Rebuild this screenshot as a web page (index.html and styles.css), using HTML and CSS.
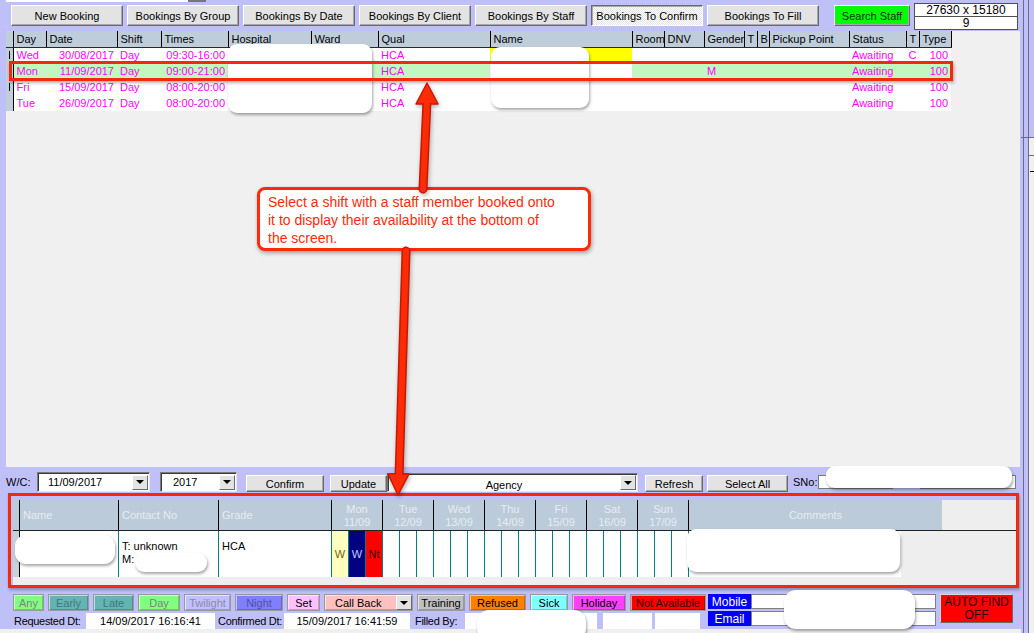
FILE: index.html
```html
<!DOCTYPE html>
<html lang="en">
<head>
    <meta charset="UTF-8">
    <title>Bookings To Confirm</title>
    <link rel="stylesheet" href="styles.css">
</head>
<body>
<div class="screen">
    <div class="main">
        <div class="topbar"><div class="topbox"></div></div>

        <div class="toolbar">
            <button class="btn tb">New Booking</button>
            <button class="btn tb">Bookings By Group</button>
            <button class="btn tb">Bookings By Date</button>
            <button class="btn tb">Bookings By Client</button>
            <button class="btn tb">Bookings By Staff</button>
            <button class="btn tb pressed">Bookings To Confirm</button>
            <button class="btn tb">Bookings To Fill</button>
            <button class="btn search">Search Staff</button>
            <div class="counter">
                <div>27630 x 15180</div>
                <div>9</div>
            </div>
        </div>

        <div class="panel-top">
            <table class="bookings">
                <colgroup>
                    <col class="w-ind"><col class="w-day"><col class="w-date"><col class="w-shift">
                    <col class="w-times"><col class="w-hosp"><col class="w-ward"><col class="w-qual">
                    <col class="w-name"><col class="w-room"><col class="w-dnv"><col class="w-gender">
                    <col class="w-t"><col class="w-b"><col class="w-pickup"><col class="w-status">
                    <col class="w-t"><col class="w-type">
                </colgroup>
                <thead>
                    <tr>
                        <th class="ind"></th><th>Day</th><th>Date</th><th>Shift</th><th>Times</th>
                        <th>Hospital</th><th>Ward</th><th>Qual</th><th>Name</th><th>Room</th>
                        <th>DNV</th><th>Gender</th><th>T</th><th>B</th><th>Pickup Point</th>
                        <th>Status</th><th>T</th><th>Type</th>
                    </tr>
                </thead>
                <tbody>
                    <tr>
                        <td class="ind"><span class="caret"></span></td><td>Wed</td><td class="r">30/08/2017</td><td>Day</td><td class="r">09:30-16:00</td>
                        <td></td><td></td><td>HCA</td><td class="yellow"></td><td></td>
                        <td></td><td></td><td></td><td></td><td></td>
                        <td>Awaiting</td><td class="c">C</td><td class="r">100</td>
                    </tr>
                    <tr class="sel">
                        <td class="ind"><span class="caret"></span></td><td>Mon</td><td class="r">11/09/2017</td><td>Day</td><td class="r">09:00-21:00</td>
                        <td></td><td></td><td>HCA</td><td class="blank"></td><td></td>
                        <td></td><td>M</td><td></td><td></td><td></td>
                        <td>Awaiting</td><td class="c"></td><td class="r">100</td>
                    </tr>
                    <tr>
                        <td class="ind"><span class="caret"></span></td><td>Fri</td><td class="r">15/09/2017</td><td>Day</td><td class="r">08:00-20:00</td>
                        <td></td><td></td><td>HCA</td><td></td><td></td>
                        <td></td><td></td><td></td><td></td><td></td>
                        <td>Awaiting</td><td class="c"></td><td class="r">100</td>
                    </tr>
                    <tr>
                        <td class="ind"></td><td>Tue</td><td class="r">26/09/2017</td><td>Day</td><td class="r">08:00-20:00</td>
                        <td></td><td></td><td>HCA</td><td></td><td></td>
                        <td></td><td></td><td></td><td></td><td></td>
                        <td>Awaiting</td><td class="c"></td><td class="r">100</td>
                    </tr>
                </tbody>
            </table>
        </div>

        <div class="filterbar">
            <span class="lbl wc-lbl">W/C:</span>
            <div class="combo wc"><span class="combo-text">11/09/2017</span><span class="dd"></span></div>
            <div class="combo year"><span class="combo-text">2017</span><span class="dd"></span></div>
            <button class="btn fb confirm">Confirm</button>
            <button class="btn fb update">Update</button>
            <div class="combo agency"><span class="combo-text">Agency</span><span class="dd"></span></div>
            <button class="btn fb refresh">Refresh</button>
            <button class="btn fb selectall">Select All</button>
            <span class="lbl sno-lbl">SNo:</span>
            <div class="field sno"></div>
            <div class="field sno2"></div>
        </div>

        <div class="avail-box">
            <div class="avail-panel">
                <div class="avail-head">
                    <div class="ah a-ind"></div>
                    <div class="ah c-name">Name</div>
                    <div class="ah c-contact">Contact No</div>
                    <div class="ah c-grade">Grade</div>
                    <div class="ah dayh">Mon<br>11/09</div>
                    <div class="ah dayh">Tue<br>12/09</div>
                    <div class="ah dayh">Wed<br>13/09</div>
                    <div class="ah dayh">Thu<br>14/09</div>
                    <div class="ah dayh">Fri<br>15/09</div>
                    <div class="ah dayh">Sat<br>16/09</div>
                    <div class="ah dayh">Sun<br>17/09</div>
                    <div class="ah c-comments">Comments</div>
                </div>
                <div class="avail-row">
                    <div class="ad a-ind"></div>
                    <div class="ad c-name"></div>
                    <div class="ad c-contact">T: unknown<br>M:</div>
                    <div class="ad c-grade">HCA</div>
                    <div class="ad a-day">
                        <span class="slot s-early">W</span><span class="slot s-navy">W</span><span class="slot s-night">Nt</span>
                    </div>
                    <div class="ad a-day"><span class="slot"></span><span class="slot"></span><span class="slot"></span></div>
                    <div class="ad a-day"><span class="slot"></span><span class="slot"></span><span class="slot"></span></div>
                    <div class="ad a-day"><span class="slot"></span><span class="slot"></span><span class="slot"></span></div>
                    <div class="ad a-day"><span class="slot"></span><span class="slot"></span><span class="slot"></span></div>
                    <div class="ad a-day"><span class="slot"></span><span class="slot"></span><span class="slot"></span></div>
                    <div class="ad a-day"><span class="slot"></span><span class="slot"></span><span class="slot"></span></div>
                    <div class="ad c-comments"></div>
                </div>
            </div>
        </div>

        <div class="bottom">
            <div class="bottom-left">
                <div class="legend">
                    <div class="lg lg-any">Any</div>
                    <div class="lg lg-early">Early</div>
                    <div class="lg lg-late">Late</div>
                    <div class="lg lg-day">Day</div>
                    <div class="lg lg-twilight">Twilight</div>
                    <div class="lg lg-night">Night</div>
                    <div class="lg lg-set">Set</div>
                    <div class="lg lg-callback"><span class="cb-text">Call Back</span><span class="dd"></span></div>
                    <div class="lg lg-training">Training</div>
                    <div class="lg lg-refused">Refused</div>
                    <div class="lg lg-sick">Sick</div>
                    <div class="lg lg-holiday">Holiday</div>
                    <div class="lg lg-notavail">Not Available</div>
                </div>
                <div class="status">
                    <span class="st-label req">Requested Dt:</span>
                    <span class="st-field f-req">14/09/2017 16:16:41</span>
                    <span class="st-label conf">Confirmed Dt:</span>
                    <span class="st-field f-conf">15/09/2017 16:41:59</span>
                    <span class="st-label filled">Filled By:</span>
                    <span class="st-field filledby"></span>
                    <span class="st-field small1"></span>
                    <span class="st-field small2"></span>
                </div>
            </div>
            <div class="contacts">
                <div class="contact-row"><span class="c-label">Mobile</span><span class="c-input"></span></div>
                <div class="contact-row"><span class="c-label">Email</span><span class="c-input"></span></div>
            </div>
            <button class="autofind">AUTO FIND<br>OFF</button>
        </div>
        <div class="footer"></div>
    </div>

    <div class="side">
        <div class="side-top"></div>
        <div class="side-bottom"><span class="side-dash"></span></div>
    </div>

    <!-- redaction blobs -->
    <div class="blob b-hosp"></div>
    <div class="blob b-name"></div>
    <div class="blob b-sno"></div>
    <div class="blob b-staff"></div>
    <div class="blob b-phone"></div>
    <div class="blob b-comment"></div>
    <div class="blob b-mobile"></div>
    <div class="blob b-filled"></div>

    <!-- annotation -->
    <div class="row-mark"></div>
    <div class="callout">Select a shift with a staff member booked onto<br>it to display their availability at the bottom of<br>the screen.</div>
    <svg class="arrows" width="1034" height="633" viewBox="0 0 1034 633">
        <g stroke="#c41a00" stroke-linecap="round" stroke-linejoin="round">
            <line x1="423" y1="189" x2="427" y2="100" stroke-width="9"/>
            <polygon points="427,83 438,104 416,104" fill="#ff2a06" stroke-width="1.5"/>
            <line x1="406" y1="251" x2="399" y2="478" stroke-width="9"/>
            <polygon points="398,495 388,474 409,474" fill="#ff2a06" stroke-width="1.5"/>
        </g>
        <g stroke="#ff2a06" stroke-linecap="round">
            <line x1="423" y1="189" x2="427" y2="101" stroke-width="6"/>
            <line x1="406" y1="251" x2="399" y2="477" stroke-width="6"/>
        </g>
    </svg>
</div>
</body>
</html>
```

FILE: styles.css
```css
* {
    margin: 0;
    padding: 0;
    box-sizing: border-box;
}

body {
    background: #c0c0f8;
    font-family: "Liberation Sans", Arial, sans-serif;
    font-size: 11px;
    color: #000;
}

button {
    font-family: inherit;
    font-size: 11px;
    color: #000;
}

.screen {
    position: relative;
    width: 1034px;
    height: 633px;
    display: flex;
    overflow: hidden;
}

.main {
    width: 1021px;
    display: flex;
    flex-direction: column;
}

/* top strip */
.topbar {
    height: 3px;
    padding-left: 6px;
}

.topbox {
    width: 200px;
    height: 2px;
    background: linear-gradient(to right, #fff 182px, #777 182px);
}

/* main toolbar */
.toolbar {
    display: flex;
    align-items: flex-start;
    height: 28px;
    padding-left: 11px;
}

.btn {
    height: 21px;
    background: #e3e3e3;
    border: 1px solid;
    border-color: #fff #6a6a6a #6a6a6a #fff;
    box-shadow: inset -1px -1px #a8a8a8;
    display: flex;
    align-items: center;
    justify-content: center;
    white-space: nowrap;
    flex-shrink: 0;
}

.tb {
    width: 112px;
    margin-top: 2px;
    margin-right: 4px;
}

.tb.pressed {
    border-color: #6a6a6a #fff #fff #6a6a6a;
    box-shadow: inset 1px 1px #a8a8a8;
    background: repeating-conic-gradient(#fff 0 25%, #e4e4e4 0 50%) 0 0 / 2px 2px;
}

.search {
    width: 76px;
    margin-top: 2px;
    margin-left: 11px;
    background: #00ff00;
    color: #0c2a0c;
}

.counter {
    width: 104px;
    height: 27px;
    margin-left: 4px;
    background: #fff;
    border: 1px solid #505050;
    font-size: 12px;
}

.counter div {
    height: 13px;
    line-height: 13px;
    text-align: center;
}

.counter div:first-child {
    border-bottom: 1px solid #505050;
}

/* bookings grid */
.panel-top {
    margin-left: 6px;
    width: 1014px;
    height: 436px;
    background: #f0f0f0;
}

.bookings {
    border-collapse: collapse;
    table-layout: fixed;
    width: 945px;
}

.w-ind { width: 7px; }
.w-day { width: 33px; }
.w-date { width: 71px; }
.w-shift { width: 44px; }
.w-times { width: 67px; }
.w-hosp { width: 83px; }
.w-ward { width: 67px; }
.w-qual { width: 112px; }
.w-name { width: 142px; }
.w-room { width: 32px; }
.w-dnv { width: 40px; }
.w-gender { width: 40px; }
.w-t { width: 13px; }
.w-b { width: 12px; }
.w-pickup { width: 80px; }
.w-status { width: 57px; }
.w-type { width: 32px; }

.bookings th {
    height: 16px;
    background: #bfcddb;
    border-right: 1px solid #000;
    border-bottom: 1px solid #2a2a2a;
    font-weight: normal;
    text-align: left;
    padding: 0 3px;
    white-space: nowrap;
    overflow: hidden;
}

.bookings td {
    height: 16px;
    padding: 0 3px;
    background: #fff;
    color: #ff00ff;
    white-space: nowrap;
    overflow: hidden;
}

.bookings .ind {
    background: #c0cedb;
    border-right: 1px solid #000;
    padding: 0 0 0 3px;
}

.caret {
    display: block;
    width: 1px;
    height: 8px;
    background: #000;
}

.bookings td.r {
    text-align: right;
}

.bookings td.c {
    text-align: center;
    padding: 0;
}

.bookings td.yellow {
    background: #ffff00;
}

.bookings tr.sel td {
    background: #c0f8c0;
}

.bookings tr.sel td.blank {
    background: #fff;
}

.bookings tr.sel td.ind {
    background: #c0cedb;
}

/* filter bar */
.filterbar {
    display: flex;
    align-items: flex-start;
    margin-top: 5px;
    height: 20px;
}

.lbl {
    height: 20px;
    display: flex;
    align-items: center;
    flex-shrink: 0;
}

.wc-lbl {
    width: 37px;
    padding-left: 6px;
}

.combo {
    display: flex;
    align-items: center;
    justify-content: space-between;
    background: #fff;
    border: 1px solid;
    border-color: #7a7a7a #e8e8e8 #e8e8e8 #7a7a7a;
    box-shadow: inset 1px 1px #3a3a3a;
    padding: 0 1px 0 0;
    flex-shrink: 0;
}

.combo.wc {
    width: 113px;
    height: 20px;
}

.combo.year {
    width: 77px;
    height: 20px;
    margin-left: 10px;
}

.combo.agency {
    width: 251px;
    height: 19px;
    margin-top: 1px;
}

.combo-text {
    padding-left: 10px;
}

.combo.year .combo-text {
    padding-left: 12px;
}

.combo.agency .combo-text {
    flex: 1;
    text-align: center;
    padding: 4px 0 0 0;
}

.dd {
    width: 16px;
    height: 15px;
    background: #e3e3e3;
    border: 1px solid;
    border-color: #fff #6a6a6a #6a6a6a #fff;
    display: flex;
    align-items: center;
    justify-content: center;
    flex-shrink: 0;
}

.dd::after {
    content: "";
    border-left: 4px solid transparent;
    border-right: 4px solid transparent;
    border-top: 4px solid #000;
}

.fb {
    height: 17px;
    margin-top: 3px;
}

.confirm { width: 78px; margin-left: 9px; }
.update { width: 57px; margin-left: 6px; }
.refresh { width: 58px; margin-left: 7px; }
.selectall { width: 81px; margin-left: 4px; }

.sno-lbl {
    margin-left: 5px;
    width: 25px;
}

.field {
    height: 14px;
    margin-top: 3px;
    background: #fff;
    border: 1px solid #7a7a7a;
}

.sno { width: 75px; }
.sno2 { width: 96px; margin-left: 27px; }

/* availability grid */
.avail-box {
    margin-top: 1px;
    margin-left: 8px;
    width: 1011px;
    height: 95px;
    border: 3px solid #f5280a;
    box-shadow: 1px 2px 3px rgba(0, 0, 0, 0.3);
}

.avail-panel {
    margin-top: 4px;
    margin-left: 2px;
    width: 1003px;
    height: 85px;
    background: #eeeeee;
}

.avail-head,
.avail-row {
    display: flex;
}

.avail-head {
    height: 31px;
    border-bottom: 1px solid #222;
}

.ah {
    background: #bccbd9;
    color: #e8ecf1;
    border-right: 1px solid #000;
    display: flex;
    align-items: center;
    padding-left: 3px;
    line-height: 13px;
}

.a-ind { width: 7px; }
.c-name { width: 99px; }
.c-contact { width: 100px; }
.c-grade { width: 113px; }
.dayh { width: 51px; }
.c-comments { width: 253px; }

.ah.a-ind {
    padding: 0;
}

.ah.dayh {
    justify-content: center;
    text-align: center;
    padding: 2px 0 0 0;
}

.ah.c-comments {
    justify-content: center;
    border-right: none;
    padding: 0;
}

.avail-row {
    height: 46px;
}

.ad {
    background: #fff;
    border-right: 1px solid #008080;
    padding: 9px 0 0 3px;
    line-height: 13px;
}

.ad.a-ind {
    background: #c8d0d8;
    border-right-color: #000;
    padding: 0;
}

.ad.a-day {
    display: flex;
    width: 51px;
    padding: 0;
    border-right: none;
}

.slot {
    width: 17px;
    border-right: 1px solid #008080;
    display: flex;
    align-items: center;
    justify-content: center;
}

.s-early {
    background: #ffffc0;
    color: #806000;
}

.s-navy {
    background: #000080;
    color: #c8c8ff;
}

.s-night {
    background: #ff0000;
    color: #400000;
}

.ad.c-comments {
    background: linear-gradient(to right, #fff 212px, transparent 212px);
    border-right: none;
}

/* legend and status rows */
.bottom {
    display: flex;
    margin-top: 6px;
    height: 35px;
}

.bottom-left {
    width: 708px;
    display: flex;
    flex-direction: column;
}

.legend {
    display: flex;
    gap: 4px;
    padding-left: 13px;
    height: 17px;
}

.lg {
    height: 17px;
    border: 1px solid #9a9a9a;
    box-shadow: inset 1px 1px rgba(255, 255, 255, 0.55), inset -1px -1px rgba(0, 0, 0, 0.2);
    display: flex;
    align-items: center;
    justify-content: center;
    white-space: nowrap;
    flex-shrink: 0;
}

.lg-any { width: 31px; background: #80ff80; color: #808080; }
.lg-early { width: 41px; background: #66b3b3; color: #3d7a7a; }
.lg-late { width: 41px; background: #66b3b3; color: #3d7a7a; }
.lg-day { width: 42px; background: #80ff80; color: #808080; }
.lg-twilight { width: 47px; background: #c0c0ff; color: #8a8aa8; }
.lg-night { width: 48px; background: #8080ff; color: #5050a0; }
.lg-set { width: 33px; background: #ffc0ff; }
.lg-callback { width: 89px; background: #ffc0c0; justify-content: space-between; padding-left: 10px; }
.lg-training { width: 48px; background: #c0c0c0; }
.lg-refused { width: 57px; background: #ff8000; }
.lg-sick { width: 38px; background: #80ffff; }
.lg-holiday { width: 54px; background: #ff40ff; }
.lg-notavail { width: 76px; background: #ff0000; color: #300000; }

.status {
    display: flex;
    align-items: center;
    margin-top: 2px;
    height: 16px;
}

.st-label {
    white-space: nowrap;
    flex-shrink: 0;
    letter-spacing: -0.3px;
}

.st-label.req { padding-left: 14px; width: 86px; }
.st-label.conf { margin-left: 3px; margin-right: 2px; }
.st-label.filled { margin-left: 5px; width: 50px; }

.st-field {
    height: 16px;
    background: #fff;
    display: flex;
    align-items: center;
    justify-content: center;
    flex-shrink: 0;
}

.st-field.f-req { width: 129px; }
.st-field.f-conf { width: 126px; }
.st-field.filledby { width: 132px; }
.st-field.small1 { width: 49px; margin-left: 6px; }
.st-field.small2 { width: 45px; margin-left: 3px; }

.contacts {
    width: 228px;
    display: flex;
    flex-direction: column;
    gap: 2px;
}

.contact-row {
    display: flex;
    height: 15px;
}

.c-label {
    width: 43px;
    background: #0000ff;
    color: #fff;
    display: flex;
    align-items: center;
    justify-content: center;
    font-size: 12px;
}

.c-input {
    flex: 1;
    background: #fff;
    border: 1px solid #808080;
}

.autofind {
    margin-left: 4px;
    width: 73px;
    height: 29px;
    background: #ff0000;
    border: 1px solid;
    border-color: #d8d8d8 #6a6a6a #6a6a6a #d8d8d8;
    color: #2a0000;
    font-size: 12px;
    line-height: 13px;
}

.footer {
    flex: 1;
    background: #efefef;
}

/* right edge */
.side {
    width: 13px;
    display: flex;
    flex-direction: column;
}

.side-top {
    height: 137px;
    background: linear-gradient(to right, #c0c0f8 0 2px, #6c6c84 2px 3px, #c0c0f8 3px 7px, #6c6c84 7px 8px, #c0c0f8 8px);
}

.side-bottom {
    flex: 1;
    position: relative;
    background: linear-gradient(to right, #c0c0f8 0 2px, #6c6c84 2px 3px, #c0c0f8 3px 7px, #6c6c84 7px 8px, #f0f0f0 8px);
    border-top: 1px solid #6c6c84;
}

.side-bottom::before {
    content: "";
    position: absolute;
    left: 8px;
    right: 0;
    top: 17px;
    border-top: 1px solid #6c6c84;
}

.side-dash {
    position: absolute;
    left: 9px;
    top: 33px;
    width: 4px;
    height: 1px;
    background: #000;
}

/* redaction blobs */
.blob {
    position: absolute;
    background: #fff;
    border-radius: 9px;
    box-shadow: 1px 2px 3px rgba(0, 0, 0, 0.35);
}

.b-hosp { left: 228px; top: 44px; width: 144px; height: 69px; }
.b-name { left: 491px; top: 47px; width: 98px; height: 61px; }
.b-sno { left: 826px; top: 466px; width: 186px; height: 22px; }
.b-staff { left: 15px; top: 535px; width: 100px; height: 29px; border-radius: 11px; }
.b-phone { left: 135px; top: 553px; width: 72px; height: 19px; }
.b-comment { left: 687px; top: 529px; width: 213px; height: 43px; }
.b-mobile { left: 784px; top: 590px; width: 131px; height: 39px; border-radius: 12px; }
.b-filled { left: 477px; top: 610px; width: 109px; height: 30px; border-radius: 12px; }

/* annotation */
.row-mark {
    position: absolute;
    left: 9px;
    top: 61px;
    width: 944px;
    height: 20px;
    border: 3px solid #f5280a;
    box-shadow: 1px 2px 3px rgba(0, 0, 0, 0.3);
}

.callout {
    position: absolute;
    left: 257px;
    top: 187px;
    width: 334px;
    height: 64px;
    background: #fff;
    border: 3px solid #ff2a06;
    border-radius: 8px;
    box-shadow: 1px 2px 4px rgba(0, 0, 0, 0.35);
    padding: 3px 0 0 8px;
    color: #ff2a06;
    font-size: 14px;
    line-height: 18px;
    white-space: nowrap;
}

.arrows {
    position: absolute;
    left: 0;
    top: 0;
    filter: drop-shadow(1px 2px 2px rgba(0, 0, 0, 0.3));
}
```
